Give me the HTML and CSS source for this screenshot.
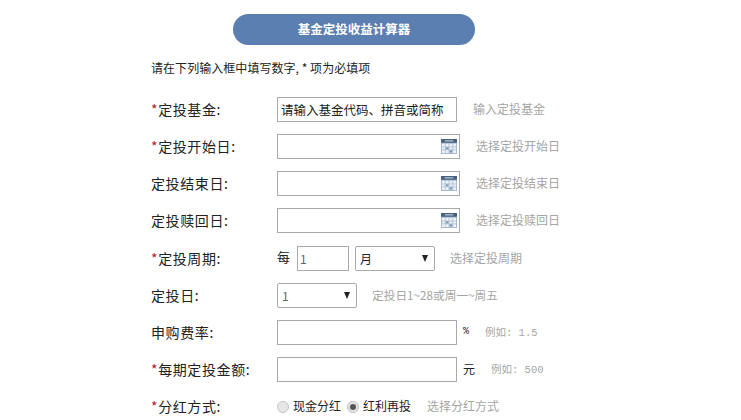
FILE: index.html
```html
<!DOCTYPE html>
<html>

<head>
    <title>基金定投收益计算器</title>
    <link rel="stylesheet" href="styles.css">
</head>

<body>
    <div class="calc">
        <h2 class="calc-title">基金定投收益计算器</h2>
        <p class="intro">请在下列输入框中填写数字, * 项为必填项</p>

        <div class="row">
            <label class="name"><em>*</em>定投基金:</label>
            <div class="box box-wide box-text">请输入基金代码、拼音或简称</div>
            <span class="tip tip-first">输入定投基金</span>
        </div>

        <div class="row">
            <label class="name"><em>*</em>定投开始日:</label>
            <div class="box box-date">
                <svg class="cal" viewBox="0 0 17 16"><use href="#cal"></use></svg>
            </div>
            <span class="tip tip-date">选择定投开始日</span>
        </div>

        <div class="row">
            <label class="name">定投结束日:</label>
            <div class="box box-date">
                <svg class="cal" viewBox="0 0 17 16"><use href="#cal"></use></svg>
            </div>
            <span class="tip tip-date">选择定投结束日</span>
        </div>

        <div class="row">
            <label class="name">定投赎回日:</label>
            <div class="box box-date">
                <svg class="cal" viewBox="0 0 17 16"><use href="#cal"></use></svg>
            </div>
            <span class="tip tip-date">选择定投赎回日</span>
        </div>

        <div class="row row-cycle">
            <label class="name"><em>*</em>定投周期:</label>
            <span class="every">每</span>
            <div class="box box-num">1</div>
            <div class="box box-select box-month">月<i class="arrow"></i></div>
            <span class="tip tip-cycle">选择定投周期</span>
        </div>

        <div class="row">
            <label class="name">定投日:</label>
            <div class="box box-select box-day">1<i class="arrow"></i></div>
            <span class="tip tip-day">定投日1~28或周一~周五</span>
        </div>

        <div class="row">
            <label class="name">申购费率:</label>
            <div class="box box-wide"></div>
            <span class="unit unit-pct">%</span>
            <span class="tip tip-mono">例如: 1.5</span>
        </div>

        <div class="row">
            <label class="name"><em>*</em>每期定投金额:</label>
            <div class="box box-wide"></div>
            <span class="unit">元</span>
            <span class="tip tip-mono">例如: 500</span>
        </div>

        <div class="row">
            <label class="name"><em>*</em>分红方式:</label>
            <i class="radio"></i><span class="opt">现金分红</span>
            <i class="radio radio-on"></i><span class="opt">红利再投</span>
            <span class="tip tip-radio">选择分红方式</span>
        </div>
    </div>

    <svg class="defs" width="0" height="0">
        <symbol id="cal" viewBox="0 0 17 16">
            <rect x="0" y="0" width="17" height="16" fill="#a3b6cb"></rect>
            <rect x="0" y="0" width="17" height="4" fill="#47607f"></rect>
            <rect x="4" y="1.5" width="9" height="1" fill="#dfe6ee"></rect>
            <rect x="1" y="5" width="15" height="10" fill="#edf2f7"></rect>
            <path d="M4.5 5v10M8.5 5v10M12.5 5v10M1 8.5h15M1 11.5h15" stroke="#b4c4d6" stroke-width="1"></path>
            <rect x="5" y="9" width="3" height="2" fill="#7e96b4"></rect>
            <rect x="9" y="12" width="3" height="2.5" fill="#7e96b4"></rect>
        </symbol>
    </svg>
</body>
</html>
```

FILE: styles.css
```css
body {
  margin: 0;
  font-family: "Noto Sans CJK SC", "Liberation Sans", sans-serif;
  background-color: #fff;
  color: #222;
  overflow: hidden;
}

.calc {
  padding: 14px 0 0 151px;
}

.calc-title {
  width: 242px;
  height: 31px;
  margin: 0 0 0 82px;
  border-radius: 16px;
  background-color: #5b7fb1;
  color: #fff;
  font-size: 12.5px;
  font-weight: bold;
  line-height: 30px;
  text-align: center;
}

.intro {
  margin: 14px 0 14px;
  font-size: 12px;
  letter-spacing: 0.05px;
  line-height: 18px;
  height: 18px;
}

.row {
  display: flex;
  align-items: center;
  height: 37px;
}

.row-cycle {
  margin-top: 1px;
}

.name {
  width: 126px;
  flex: none;
  margin-bottom: 2px;
  font-size: 14px;
  letter-spacing: 0.6px;
}

.name em {
  color: #b5202a;
  font-style: normal;
}

.box {
  box-sizing: border-box;
  height: 25px;
  border: 1px solid #aaa;
  background-color: #fff;
  font-size: 12px;
  line-height: 23px;
}

.box-wide {
  width: 180px;
}

.box-text {
  padding-left: 3px;
  font-size: 12.5px;
  color: #222;
}

.box-date {
  width: 183px;
  display: flex;
  align-items: center;
  justify-content: flex-end;
  padding-right: 2px;
}

.cal {
  width: 16px;
  height: 15px;
}

.defs {
  position: absolute;
}

.every {
  width: 20px;
  font-size: 13px;
  margin-bottom: 5px;
}

.box-num {
  width: 52px;
  padding-left: 2px;
  color: #586a58;
}

.box-select {
  display: flex;
  align-items: center;
  justify-content: space-between;
  border-radius: 2px;
  padding: 0 6px 0 4px;
}

.box-month {
  width: 80px;
  margin-left: 6px;
}

.box-day {
  width: 80px;
  padding-left: 4px;
  color: #586a58;
}

.arrow {
  width: 0;
  height: 0;
  border-left: 3.5px solid transparent;
  border-right: 3.5px solid transparent;
  border-top: 7px solid #222;
}

.tip {
  margin-bottom: 2px;
  color: #a5a5a5;
  font-size: 12px;
}

.tip-first {
  margin-left: 16px;
}

.tip-date {
  margin-left: 16px;
}

.tip-cycle {
  margin-left: 15px;
}

.tip-day {
  margin-left: 15px;
  font-size: 11.7px;
}

.tip-mono {
  font-family: "Liberation Mono", "Noto Sans CJK SC", monospace;
  font-size: 10.5px;
  margin-left: 16px;
}

.unit {
  margin-left: 6px;
  margin-bottom: 2px;
  width: 12px;
  font-size: 12px;
}

.unit-pct {
  font-family: "Liberation Mono", monospace;
  font-size: 10px;
  width: 6px;
}

.radio {
  box-sizing: border-box;
  width: 12px;
  height: 12px;
  border: 1px solid #c4c4c4;
  border-radius: 50%;
  background-color: #e6e6e6;
}

.radio-on {
  border: 3px solid #e4e4e4;
  outline: 1px solid #c4c4c4;
  outline-offset: -1px;
  background-color: #555;
}

.opt {
  font-size: 12px;
  margin: 0 6px 2px 4px;
}

.tip-radio {
  margin-left: 10px;
}
```
